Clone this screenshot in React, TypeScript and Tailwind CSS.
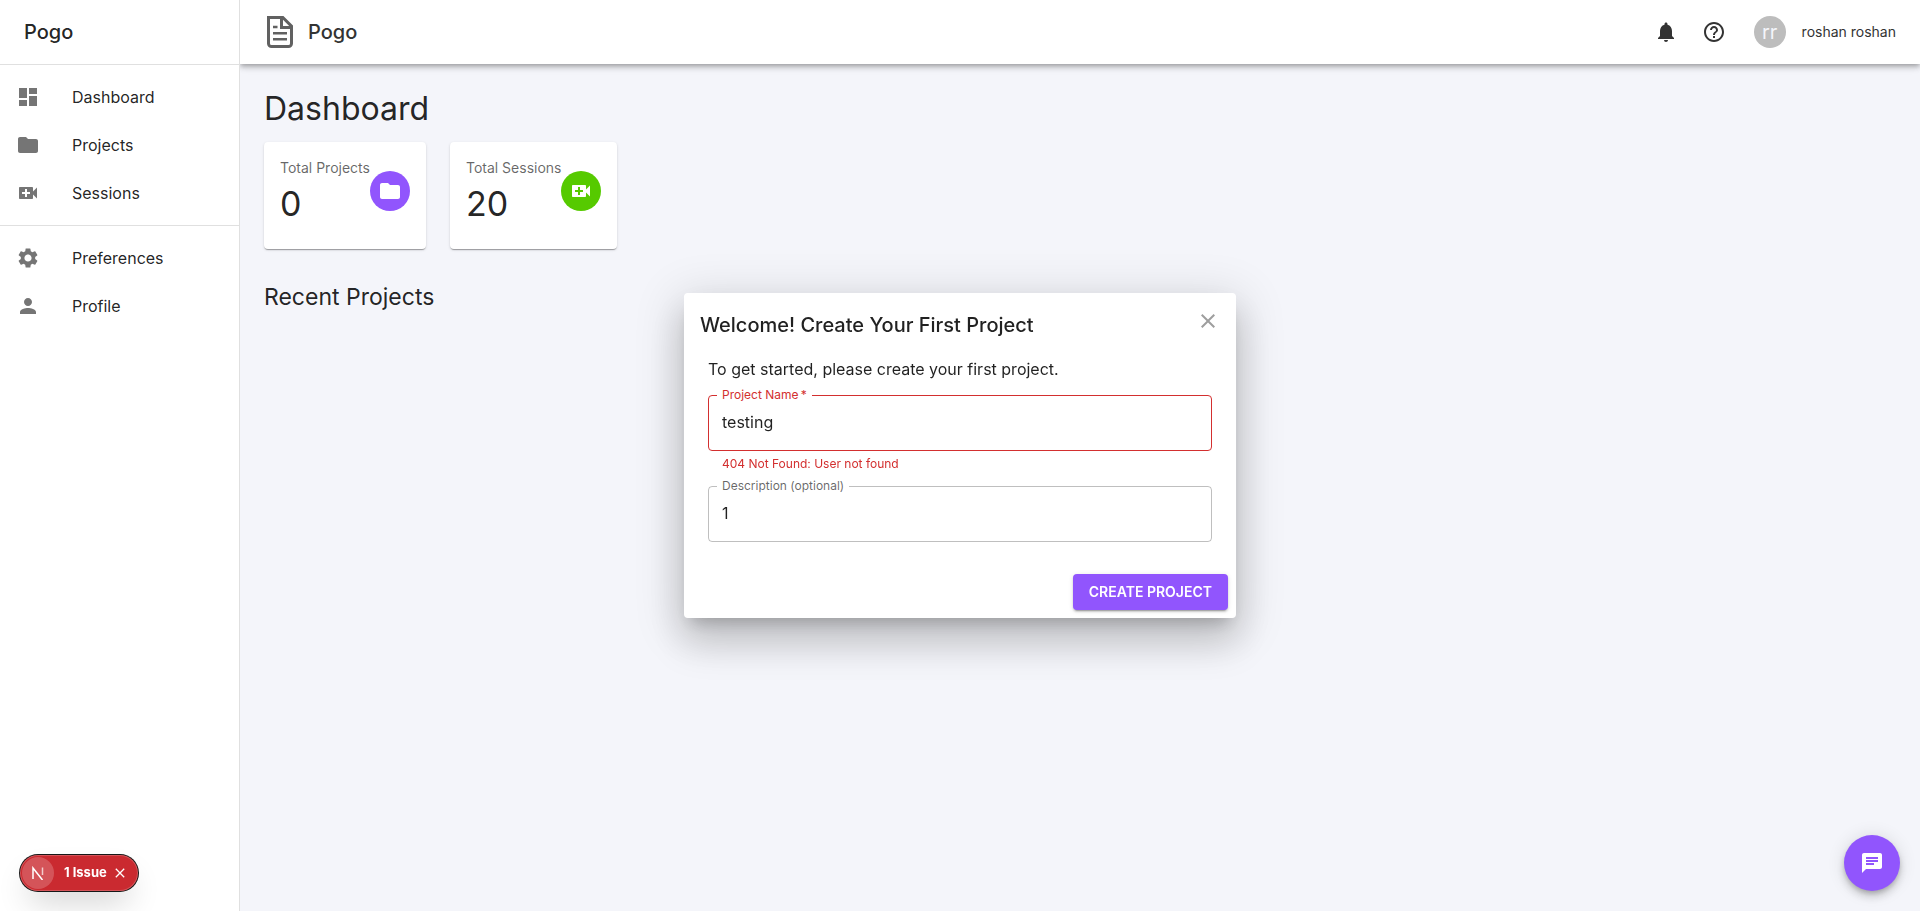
import { useState } from "react";
import type { ReactNode } from "react";
import {
  MdDashboard,
  MdFolder,
  MdVideoCall,
  MdSettings,
  MdPerson,
  MdNotifications,
  MdHelpOutline,
  MdChat,
  MdClose,
} from "react-icons/md";

function NavItem({ icon, label }: { icon: ReactNode; label: string }) {
  return (
    <li>
      <a href="#" className="flex h-12 items-center px-4 text-base">
        <span className="w-14 text-2xl text-[#757575]">{icon}</span>
        {label}
      </a>
    </li>
  );
}

function StatCard({ label, value, icon, tone }: { label: string; value: string; icon: ReactNode; tone: string }) {
  return (
    <section className="flex items-start rounded bg-white px-4 pt-4 pb-[25px] shadow-[0_2px_1px_-1px_rgba(0,0,0,0.2),0_1px_1px_0_rgba(0,0,0,0.14),0_1px_3px_0_rgba(0,0,0,0.12)]">
      <div>
        <h2 className="mb-1.5 text-sm leading-5 text-black/60">{label}</h2>
        <p className="text-[34px] leading-10">{value}</p>
      </div>
      <div className={`flex size-10 items-center justify-center self-center rounded-full text-2xl text-white ${tone}`}>
        {icon}
      </div>
    </section>
  );
}

function Field({
  id,
  label,
  initial,
  required,
  error,
}: {
  id: string;
  label: string;
  initial: string;
  required?: boolean;
  error?: string;
}) {
  const [value, setValue] = useState(initial);
  return (
    <div>
      <div className={`relative flex h-14 rounded border ${error ? "border-[#d32f2f]" : "border-black/25"}`}>
        <label
          htmlFor={id}
          className={`absolute -top-[9px] left-2 bg-white px-[5px] text-xs leading-4 ${error ? "text-[#d32f2f]" : "text-black/60"}`}
        >
          {label}
          {required && <span aria-hidden="true">{"\u2009*"}</span>}
        </label>
        <input
          id={id}
          value={value}
          onChange={(e) => setValue(e.target.value)}
          className="w-full bg-transparent px-[13px] pb-[2px] text-base outline-none"
        />
      </div>
      {error && <p className="mx-3.5 mt-[3px] text-xs leading-5 text-[#d32f2f]">{error}</p>}
    </div>
  );
}

function DocumentLogo() {
  return (
    <svg viewBox="0 0 26 32" className="h-8 w-[26px]" fill="none" stroke="#616161" strokeWidth="3">
      <path d="M1.500 1.500H15.800L24.500 10.200v17.300a3 3 0 0 1-3 3h-17a3 3 0 0 1-3-3z" />
      <path d="M14.500 1v10.500H25" strokeWidth="3" />
      <path d="M6 11h4.500M6 17.200h14M6 23.200h14" strokeWidth="2.400" />
    </svg>
  );
}

export default function App() {
  return (
    <div className="flex min-h-screen bg-[#f4f5fa] font-['Inter',sans-serif] text-black/87">
      <aside className="z-10 flex w-60 shrink-0 flex-col border-r border-black/12 bg-white">
        <div className="box-content flex h-16 items-center border-b border-black/12 px-6 text-xl font-medium">Pogo</div>
        <nav>
          <ul className="border-b border-black/12 py-2">
            <NavItem icon={<MdDashboard />} label="Dashboard" />
            <NavItem icon={<MdFolder />} label="Projects" />
            <NavItem icon={<MdVideoCall />} label="Sessions" />
          </ul>
          <ul className="py-2">
            <NavItem icon={<MdSettings />} label="Preferences" />
            <NavItem icon={<MdPerson />} label="Profile" />
          </ul>
        </nav>
      </aside>

      <div className="flex min-w-0 grow flex-col">
        <header className="flex h-16 items-center bg-white pr-6 pl-[27px] text-[#333] shadow-[0_2px_4px_-1px_rgba(0,0,0,0.2),0_4px_5px_0_rgba(0,0,0,0.14),0_1px_10px_0_rgba(0,0,0,0.12)]">
          <DocumentLogo />
          <span className="ml-[15px] text-xl font-medium">Pogo</span>
          <div className="ml-auto flex items-center">
            <button aria-label="Notifications" className="p-3 text-2xl">
              <MdNotifications />
            </button>
            <button aria-label="Help" className="p-3 text-2xl">
              <MdHelpOutline />
            </button>
            <span className="ml-4 flex size-8 items-center justify-center rounded-full bg-[#bdbdbd] text-xl text-[#f4f5fa]">
              rr
            </span>
            <span className="ml-4 text-sm">roshan roshan</span>
          </div>
        </header>
        <main className="p-6">
          <h1 className="mb-3 text-[32px] leading-[42px]">Dashboard</h1>
          <div className="flex gap-6">
            <StatCard label="Total Projects" value="0" icon={<MdFolder />} tone="bg-[#9155fd]" />
            <StatCard label="Total Sessions" value="20" icon={<MdVideoCall />} tone="bg-[#56ca00]" />
          </div>
          <h2 className="mt-8 text-[23px] leading-8">Recent Projects</h2>
        </main>
      </div>

      <div className="pointer-events-none fixed inset-0 z-20 flex items-center justify-center">
        <div
          role="dialog"
          aria-labelledby="dialog-title"
          className="pointer-events-auto w-full max-w-[552px] rounded bg-white shadow-[0_11px_15px_-7px_rgba(0,0,0,0.2),0_24px_38px_3px_rgba(0,0,0,0.14),0_9px_46px_8px_rgba(0,0,0,0.12)]"
        >
          <div className="flex items-start justify-between px-4 pt-4">
            <h2 id="dialog-title" className="text-xl leading-8 font-medium">
              Welcome! Create Your First Project
            </h2>
            <button aria-label="Close" className="text-2xl text-[#9e9e9e]">
              <MdClose />
            </button>
          </div>
          <form onSubmit={(e) => e.preventDefault()}>
            <div className="flex flex-col gap-3 px-6 pt-4 pb-8">
              <p className="mb-[2px] text-base leading-6">To get started, please create your first project.</p>
              <Field id="project-name" label="Project Name" initial="testing" required error="404 Not Found: User not found" />
              <Field id="description" label="Description (optional)" initial="1" />
            </div>
            <div className="flex justify-end p-2 pt-0">
              <button
                type="submit"
                className="h-9 rounded bg-[#9155fd] px-4 text-sm font-semibold text-white uppercase shadow-[0_3px_1px_-2px_rgba(0,0,0,0.2),0_2px_2px_0_rgba(0,0,0,0.14),0_1px_5px_0_rgba(0,0,0,0.12)]"
              >
                Create Project
              </button>
            </div>
          </form>
        </div>
      </div>

      <button
        aria-label="Open chat"
        className="fixed right-5 bottom-5 flex size-14 items-center justify-center rounded-full bg-[#9155fd] text-2xl text-white shadow-[0_3px_5px_-1px_rgba(0,0,0,0.2),0_6px_10px_0_rgba(0,0,0,0.14),0_1px_18px_0_rgba(0,0,0,0.12)]"
      >
        <MdChat />
      </button>

      <div className="fixed bottom-5 left-5 z-10 flex h-9 items-center rounded-full bg-[#ca2a30] pr-[13px] pl-[2px] text-white shadow-[0_0_0_1px_#171717,inset_0_0_0_1px_rgba(255,255,255,0.2),0_16px_32px_-8px_rgba(0,0,0,0.24)]">
        <span className="flex size-8 items-center justify-center rounded-full bg-white/20">
          <svg viewBox="0 0 14 14" className="size-3.5" fill="none" stroke="currentColor" strokeWidth="1.5">
            <path d="M2 13V2l9.500 12" />
            <path d="M11.500 1.500V9" opacity=".7" />
          </svg>
        </span>
        <button className="ml-2.5 text-[13px] font-bold">1 Issue</button>
        <button aria-label="Dismiss" className="ml-2">
          <svg viewBox="0 0 10 10" className="size-2.5" fill="none" stroke="currentColor" strokeWidth="1.3">
            <path d="M.8.8l8.400 8.400M9.200.8L.8 9.200" />
          </svg>
        </button>
      </div>
    </div>
  );
}
